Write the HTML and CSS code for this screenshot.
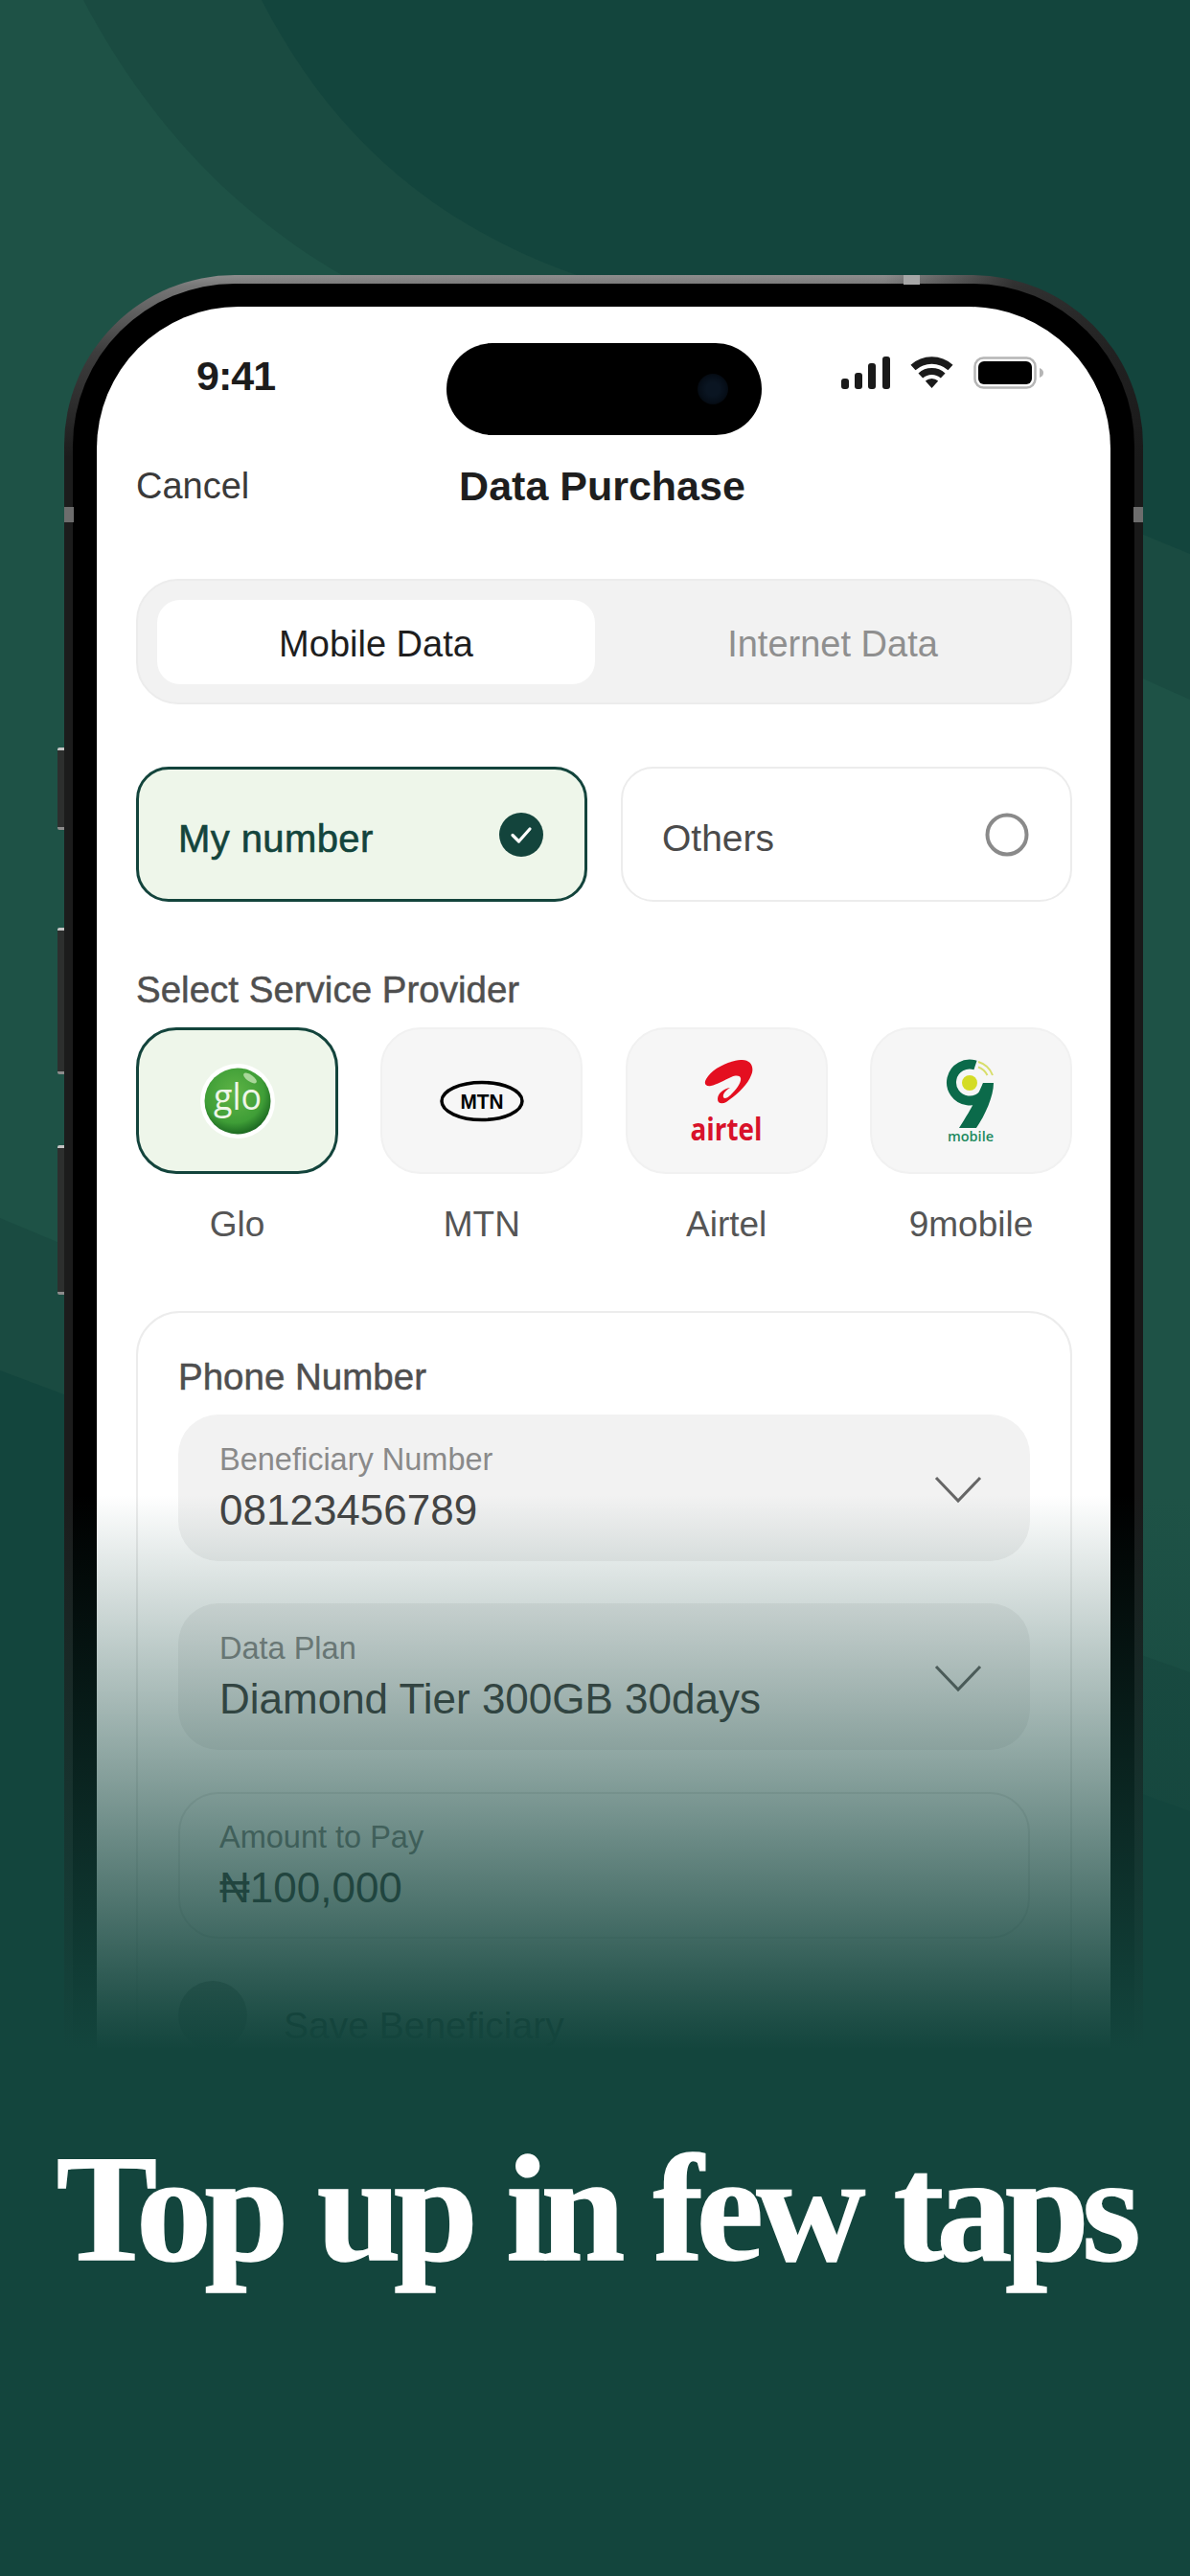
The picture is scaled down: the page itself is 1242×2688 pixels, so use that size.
FILE: index.html
```html
<!DOCTYPE html>
<html lang="en">
<head>
<meta charset="utf-8">
<title>Top up in few taps</title>
<link rel="stylesheet" href="styles.css">
</head>
<body>
<main class="poster">
  <svg class="backdrop" viewBox="0 0 1242 2688" aria-hidden="true">
    <path class="arc-b" d="M0 0H273C340 130 440 230 602 287C800 370 1000 480 1242 578V1890C800 1730 400 1580 0 1430Z"/>
    <path class="arc-c" d="M0 0H87C150 120 240 220 357 287C600 420 900 580 1242 730V1745C800 1590 400 1440 0 1271Z"/>
  </svg>
  <section class="hero">
    <div class="phone">
      <i class="btn btn-a"></i><i class="btn btn-b"></i><i class="btn btn-c"></i>
      <i class="band band-top"></i><i class="band band-left"></i><i class="band band-right"></i>
      <div class="screen">
        <div class="status">
          <span class="time">9:41</span>
          <div class="island"><i class="lens"></i></div>
          <div class="status-icons">
            <svg width="51" height="34" viewBox="0 0 51 34"><rect x="0" y="23" width="8" height="11" rx="3"/><rect x="14" y="17" width="8" height="17" rx="3"/><rect x="28" y="7" width="8" height="27" rx="3"/><rect x="43" y="0" width="8" height="34" rx="3"/></svg>
            <svg width="47" height="34" viewBox="0 0 47 34"><path d="M16.800 25.600A10 10 0 0 1 30.200 25.600L23.500 33Z"/><path d="M11.800 20A17.500 17.500 0 0 1 35.200 20" fill="none" stroke="#1a1a1a" stroke-width="7"/><path d="M4 11.500A29 29 0 0 1 43 11.500" fill="none" stroke="#1a1a1a" stroke-width="7.500"/></svg>
            <svg width="75" height="34" viewBox="0 0 75 34"><rect x="1.500" y="1.500" width="63" height="31" rx="9" fill="none" stroke="#b5b5b5" stroke-width="2.500"/><rect x="5" y="5" width="56" height="24" rx="6" fill="#000"/><path d="M69 12c3 1 4 3 4 5s-1 4-4 5z" fill="#b5b5b5"/></svg>
          </div>
        </div>
        <header class="nav">
          <span class="cancel">Cancel</span>
          <h1 class="nav-title">Data Purchase</h1>
        </header>
        <div class="content">
          <div class="segment">
            <span class="tab tab-on">Mobile Data</span>
            <span class="tab">Internet Data</span>
          </div>
          <div class="choices">
            <div class="choice choice-on">
              <span>My number</span>
              <svg width="46" height="46" viewBox="0 0 46 46"><circle cx="23" cy="23" r="23" fill="#13443c"/><path d="M14 23.500l6.500 6.500L32 17" fill="none" stroke="#fff" stroke-width="3.200" stroke-linecap="round" stroke-linejoin="round"/></svg>
            </div>
            <div class="choice">
              <span>Others</span>
              <svg width="46" height="46" viewBox="0 0 46 46"><circle cx="23" cy="23" r="20.500" fill="none" stroke="#8a8a8a" stroke-width="4"/></svg>
            </div>
          </div>
          <h2 class="section-label">Select Service Provider</h2>
          <ul class="providers">
            <li class="provider">
              <div class="tile tile-on">
                <svg class="logo" width="78" height="78" viewBox="0 0 78 78">
                  <defs><radialGradient id="g" cx="45%" cy="38%" r="62%"><stop offset="0" stop-color="#5fb446"/><stop offset=".72" stop-color="#3f9e37"/><stop offset="1" stop-color="#1d6a22"/></radialGradient></defs>
                  <circle cx="39" cy="39" r="39" fill="#fff"/><circle cx="39" cy="39" r="34.500" fill="url(#g)"/>
                  <ellipse cx="52" cy="15" rx="8" ry="3.500" fill="#a9d79a" transform="rotate(35 52 15)"/>
                  <text class="logo-glo" x="39" y="48" text-anchor="middle" textLength="50" lengthAdjust="spacingAndGlyphs">glo</text>
                </svg>
              </div>
              <span>Glo</span>
            </li>
            <li class="provider">
              <div class="tile">
                <svg class="logo" width="88" height="44" viewBox="0 0 88 44"><ellipse cx="44" cy="22" rx="42" ry="19.500" fill="none" stroke="#000" stroke-width="3.500"/><text class="logo-mtn" x="44" y="29.500" text-anchor="middle" textLength="45" lengthAdjust="spacingAndGlyphs">MTN</text></svg>
              </div>
              <span>MTN</span>
            </li>
            <li class="provider">
              <div class="tile">
                <svg class="logo" width="76" height="87" viewBox="0 0 76 87">
                  <path d="M53 1C63 0 68 8 64 17C60 28 48 38 38 45C34 47 29 47 29 42C29 36 35 31 42 30C37 33 34 37 35 40C36 42 39 41 42 38C49 32 54 24 53 20C52 17 48 17 43 19C36 22 28 27 22 28C17 29 14 26 17 21C23 10 40 2 53 1Z" fill="#e40f20"/>
                  <text class="logo-airtel" x="38" y="85" text-anchor="middle" textLength="75" lengthAdjust="spacingAndGlyphs">airtel</text>
                </svg>
              </div>
              <span>Airtel</span>
            </li>
            <li class="provider">
              <div class="tile">
                <svg class="logo" width="50" height="86" viewBox="0 0 50 86">
                  <path d="M30 5.500A19 19 0 1 0 43 24" fill="none" stroke="#0b6a4a" stroke-width="10"/>
                  <path d="M38 24H49C49 38 40 58 31 71H13C20 60 26 50 30 42Z" fill="#0b6a4a"/>
                  <circle cx="24" cy="24" r="8" fill="#d4dc26"/>
                  <path d="M33 2A23 23 0 0 1 48 16M33 7.500A17 17 0 0 1 42.500 16" fill="none" stroke="#d8de6a" stroke-width="2"/>
                  <text class="logo-nine" x="25" y="85" text-anchor="middle" textLength="48" lengthAdjust="spacingAndGlyphs">mobile</text>
                </svg>
              </div>
              <span>9mobile</span>
            </li>
          </ul>
          <section class="card">
            <h2 class="section-label card-title">Phone Number</h2>
            <div class="field">
              <div class="field-text"><small>Beneficiary Number</small><strong>08123456789</strong></div>
              <svg class="chev" width="50" height="30" viewBox="0 0 50 30"><path d="M2 3l23 24L48 3" fill="none" stroke="#666" stroke-width="3"/></svg>
            </div>
            <div class="field">
              <div class="field-text"><small>Data Plan</small><strong>Diamond Tier 300GB 30days</strong></div>
              <svg class="chev" width="50" height="30" viewBox="0 0 50 30"><path d="M2 3l23 24L48 3" fill="none" stroke="#666" stroke-width="3"/></svg>
            </div>
            <div class="field field-outline">
              <div class="field-text"><small>Amount to Pay</small><strong>₦100,000</strong></div>
            </div>
            <div class="save"><i class="save-dot"></i><span>Save Beneficiary</span></div>
          </section>
        </div>
      </div>
    </div>
    <div class="fade"></div>
  </section>
  <h2 class="headline">Top up in few taps</h2>
</main>
</body>
</html>
```
FILE: styles.css
```css
* { box-sizing: border-box; margin: 0; padding: 0; }
html, body { width: 1242px; height: 2688px; overflow: hidden; }
body { background: #13453d; font-family: "Liberation Sans", Arial, sans-serif; }
ul { list-style: none; }

.poster { position: relative; width: 1242px; height: 2688px; overflow: hidden; background: #13453d; }
.backdrop { position: absolute; inset: 0; width: 1242px; height: 2688px; }
.arc-b { fill: #1a4b41; }
.arc-c { fill: #1e5246; }

.hero { position: relative; height: 2140px; padding: 287px 49px 0 67px; overflow: hidden; }
.fade { position: absolute; left: 0; right: 0; top: 1560px; bottom: 0; background: linear-gradient(to bottom, rgba(19,69,61,0) 0, rgba(19,69,61,.93) 530px, #13453d 578px, #13453d 100%); }

.phone { position: relative; width: 1126px; height: 2300px; border-radius: 178px; border: 9px solid transparent; padding: 24px 25px 0;
  background:
    linear-gradient(#000, #000) padding-box,
    linear-gradient(to right, rgba(24,24,24,0) 76%, rgba(24,24,24,.75) 88%) border-box,
    linear-gradient(to bottom, #8d8d8d 0, #767676 12px, #3d3d3d 80px, #1c1c1c 190px) border-box; }
.btn { position: absolute; left: -16px; width: 7px; background: #2d2f2e; border-top: 3px solid #c4c4c4; border-bottom: 3px solid #8c8c8c; border-radius: 2px 0 0 2px; }
.btn-a { top: 484px; height: 86px; }
.btn-b { top: 672px; height: 153px; }
.btn-c { top: 899px; height: 156px; }
.band { position: absolute; background: #a6a6a6; }
.band-top { top: -9px; left: 867px; width: 17px; height: 10px; }
.band-left { left: -9px; top: 233px; width: 10px; height: 16px; background: #6d6d6d; }
.band-right { right: -9px; top: 233px; width: 10px; height: 16px; background: #6d6d6d; }

.screen { background: #fff; height: 100%; border-radius: 148px 148px 0 0; overflow: hidden; color: #1c1c1c; }
.status { position: relative; display: flex; justify-content: space-between; align-items: flex-start; height: 150px; padding: 50px 68px 0 104px; }
.time { font-size: 43px; font-weight: 700; letter-spacing: -1px; line-height: 44px; color: #1c1c1c; }
.island { position: absolute; left: 365px; top: 38px; width: 329px; height: 96px; border-radius: 48px; background: #000; }
.lens { position: absolute; right: 35px; top: 32px; width: 32px; height: 32px; border-radius: 50%; background: radial-gradient(circle, #0a1522 30%, #060e18 60%, #000 100%); }
.status-icons { display: flex; align-items: center; gap: 20px; margin-top: 2px; }
.status-icons svg { display: block; fill: #1a1a1a; }

.nav { position: relative; display: flex; justify-content: center; align-items: center; height: 70px; margin-top: 2px; }
.cancel { position: absolute; left: 41px; font-size: 38px; color: #3a3a3a; }
.nav-title { font-size: 43px; font-weight: 700; color: #1e1e1e; margin-left: -3px; }

.content { padding: 62px 40px 0 41px; }
.segment { display: grid; grid-template-columns: 457px 1fr; height: 131px; padding: 20px 0 19px 20px; background: #f2f2f2; border: 2px solid #ececec; border-radius: 44px; }
.tab { display: flex; align-items: center; justify-content: center; padding-top: 5px; font-size: 38px; color: #8f8f8f; border-radius: 24px; }
.tab-on { background: #fff; color: #1e1e1e; }

.choices { display: grid; grid-template-columns: 1fr 1fr; gap: 35px; margin-top: 65px; }
.choice { display: flex; align-items: center; justify-content: space-between; height: 141px; padding: 0 43px 0 41px; border: 2px solid #ececec; border-radius: 34px; font-size: 39px; color: #4b4b4b; }
.choice span { margin-top: 9px; }
.choice-on { background: #eef6ea; border: 3px solid #13443c; color: #13443c; font-size: 40px; letter-spacing: .4px; -webkit-text-stroke: .6px #13443c; }

.section-label { font-size: 38.500px; line-height: 43px; font-weight: 400; color: #4f4f4f; -webkit-text-stroke: .5px #4f4f4f; }
.choices + .section-label { margin-top: 70px; }
.providers { display: grid; grid-template-columns: repeat(4, 211px); justify-content: space-between; margin-top: 18px; }
.provider { display: flex; flex-direction: column; align-items: center; font-size: 37px; line-height: 41px; color: #555; }
.tile { display: flex; align-items: center; justify-content: center; width: 211px; height: 153px; border-radius: 42px; background: #f6f6f6; border: 2px solid #f1f1f1; margin-bottom: 32px; }
.tile-on { background: #eef6ea; border: 3px solid #13443c; }
.logo { overflow: visible; }
.logo-glo { font: 38px "Open Sans", sans-serif; fill: #eef6e8; }
.logo-mtn { font: 700 22px "Liberation Sans", sans-serif; fill: #000; }
.logo-airtel { font: 700 32px "Open Sans", sans-serif; fill: #d8122a; }
.logo-nine { font: 600 15px "Open Sans", sans-serif; fill: #1e8a5f; }

.card { margin-top: 70px; height: 900px; padding: 45px 42px 0; border: 2px solid #ececec; border-radius: 46px; }
.card-title { margin-bottom: 18px; }
.field { display: flex; align-items: center; justify-content: space-between; height: 153px; margin-bottom: 44px; padding: 0 50px 0 43px; border-radius: 42px; background: #f2f2f2; }
.field-outline { background: transparent; border: 2px solid #ececec; padding-left: 41px; }
.field-text { display: flex; flex-direction: column; gap: 11px; }
.field small { font-size: 32.500px; line-height: 36px; color: #8a8a8a; }
.field strong { font-size: 44px; line-height: 48px; font-weight: 400; color: #444; }
.chev { display: block; margin-top: 2px; }
.save { display: flex; align-items: center; gap: 38px; margin-top: 12px; font-size: 39px; color: #2a2a2a; }
.save span { margin-top: 22px; }
.save-dot { width: 72px; height: 72px; border-radius: 50%; background: #a8a8a8; }

.headline { font-family: "Liberation Serif", "Times New Roman", serif; font-weight: 700; font-size: 158px; line-height: 180px; letter-spacing: -7.600px; word-spacing: 5px; color: #fff; text-align: center; white-space: nowrap; margin-top: 75px; -webkit-text-stroke: 1.500px #fff; }
```
